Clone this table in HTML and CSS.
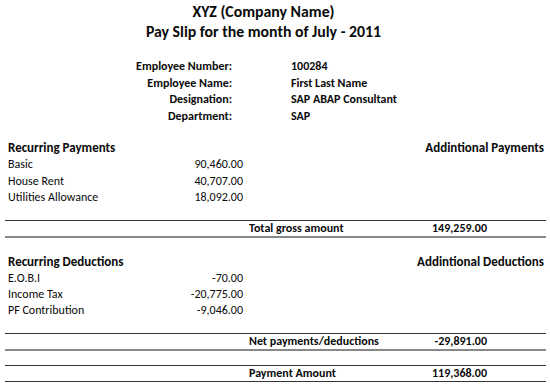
FILE: index.html
```html
<!DOCTYPE html>
<html lang="en">
<head>
<meta charset="utf-8">
<title>Pay Slip</title>
<link rel="stylesheet" href="styles.css">
</head>
<body>
<div class="slip">
  <header class="title">
    <div>XYZ (Company Name)</div>
    <div>Pay Slip for the month of July - 2011</div>
  </header>

  <div class="info">
    <div class="info-label">Employee Number:</div><div class="info-value">100284</div>
    <div class="info-label">Employee Name:</div><div class="info-value">First Last Name</div>
    <div class="info-label">Designation:</div><div class="info-value">SAP ABAP Consultant</div>
    <div class="info-label">Department:</div><div class="info-value">SAP</div>
  </div>

  <section class="group group-pay">
    <div class="row head">
      <div class="c-label">Recurring Payments</div>
      <div class="c-extra">Addintional Payments</div>
    </div>
    <div class="row"><div class="c-label">Basic</div><div class="c-amt">90,460.00</div></div>
    <div class="row"><div class="c-label">House Rent</div><div class="c-amt">40,707.00</div></div>
    <div class="row"><div class="c-label">Utilities Allowance</div><div class="c-amt">18,092.00</div></div>
  </section>

  <div class="row total total-gross">
    <div class="c-sum-label">Total gross amount</div>
    <div class="c-sum">149,259.00</div>
  </div>

  <section class="group group-ded">
    <div class="row head">
      <div class="c-label">Recurring Deductions</div>
      <div class="c-extra">Addintional Deductions</div>
    </div>
    <div class="row"><div class="c-label">E.O.B.I</div><div class="c-amt">-70.00</div></div>
    <div class="row"><div class="c-label">Income Tax</div><div class="c-amt">-20,775.00</div></div>
    <div class="row"><div class="c-label">PF Contribution</div><div class="c-amt">-9,046.00</div></div>
  </section>

  <div class="row total total-net">
    <div class="c-sum-label">Net payments/deductions</div>
    <div class="c-sum">-29,891.00</div>
  </div>

  <div class="row total total-pay">
    <div class="c-sum-label">Payment Amount</div>
    <div class="c-sum">119,368.00</div>
  </div>
</div>
</body>
</html>
```

FILE: styles.css
```css
* { box-sizing: border-box; }

html, body {
  margin: 0;
  padding: 0;
  background: #fff;
}

body {
  font-family: Carlito, Lato, "Open Sans", sans-serif;
  font-size: 12px;
  color: #0a0a0a;
}

.slip {
  width: 550px;
  padding: 2px 4px 0 5px;
}

.title {
  font-size: 15.8px;
  font-weight: bold;
  line-height: 20px;
  text-align: center;
  padding-right: 24px;
}

.info {
  margin-top: 16px;
  display: grid;
  grid-template-columns: 227px 59px auto;
  grid-auto-rows: 16.5px;
  line-height: 16.5px;
  font-weight: bold;
}

.info-label {
  grid-column: 1;
  text-align: right;
}

.info-value {
  grid-column: 3;
}

.row {
  display: grid;
  grid-template-columns: 145px 93px 6px 176px 62px 59px;
  height: 16.5px;
  line-height: 16.5px;
}

.group-pay { margin-top: 15.5px; }
.group-ded { margin-top: 16px; }
.group-ded .row { height: 16px; line-height: 16px; }

.head {
  font-weight: bold;
  font-size: 13px;
}

.c-label {
  grid-column: 1;
  padding-left: 3px;
  white-space: nowrap;
}

.c-amt {
  grid-column: 2;
  text-align: right;
}

.c-extra {
  grid-column: 4 / 7;
  text-align: right;
  padding-right: 2px;
}

.total {
  height: 18px;
  line-height: 15px;
  border-top: 1px solid #333;
  border-bottom: 2px solid #888;
  font-weight: bold;
}

.c-sum-label {
  grid-column: 4;
}

.c-sum {
  grid-column: 5;
  text-align: right;
}

.total-gross { margin-top: 14.25px; }
.total-net { margin-top: 15px; }
.total-pay {
  margin-top: 14px;
  border-bottom: 1px solid #333;
  height: 17px;
}
```
